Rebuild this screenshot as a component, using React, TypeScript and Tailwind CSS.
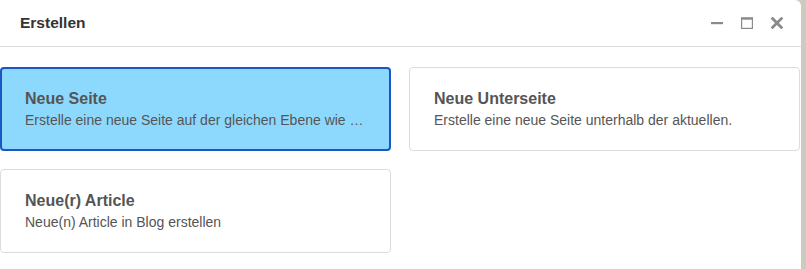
const cards = [
    {
        title: "Neue Seite",
        text: "Erstelle eine neue Seite auf der gleichen Ebene wie …",
        active: true,
    },
    {
        title: "Neue Unterseite",
        text: "Erstelle eine neue Seite unterhalb der aktuellen.",
        active: false,
    },
    {
        title: "Neue(r) Article",
        text: "Neue(n) Article in Blog erstellen",
        active: false,
    },
];

function MinimizeIcon() {
    return (
        <svg width="12" height="12" viewBox="0 0 12 12" className="block">
            <rect x="0" y="5" width="12" height="2.2" fill="#8a8a8a" />
        </svg>
    );
}

function MaximizeIcon() {
    return (
        <svg width="12" height="12" viewBox="0 0 12 12" className="block">
            <rect x="0.6" y="1" width="10.8" height="10.4" fill="none" stroke="#8a8a8a" strokeWidth="1.2" />
            <rect x="0" y="0.5" width="12" height="2.2" fill="#8a8a8a" />
        </svg>
    );
}

function CloseIcon() {
    return (
        <svg width="12" height="12" viewBox="0 0 12 12" className="block">
            <path d="M1.6 1.6 L10.4 10.4 M10.4 1.6 L1.6 10.4" stroke="#8a8a8a" strokeWidth="2.8" strokeLinecap="square" />
        </svg>
    );
}

export default function App() {
    return (
        <div className="flex w-[806px] h-[269px] bg-[#cbcbc0] font-['Liberation_Sans',Arial,sans-serif]">
            <div className="w-[801px] h-full bg-white rounded-tr-[6px] flex flex-col">
                <div className="h-[47px] flex items-center justify-between pl-5 pr-[18px] border-b border-[#dddddd]">
                    <h2 className="text-[15.5px] font-bold text-[#333333]">Erstellen</h2>
                    <div className="flex items-center gap-[18px]">
                        <button className="p-0"><MinimizeIcon /></button>
                        <button className="p-0"><MaximizeIcon /></button>
                        <button className="p-0"><CloseIcon /></button>
                    </div>
                </div>

                <div className="grid grid-cols-2 gap-[18px] pt-5 pr-px">
                    {cards.map((card) => (
                        <div
                            key={card.title}
                            className={
                                card.active
                                    ? "h-[84px] flex flex-col justify-center gap-[2px] pl-[23px] pr-[20px] rounded-[4px] border-2 border-[#1a56c6] bg-[#8dd9fd]"
                                    : "h-[84px] flex flex-col justify-center gap-[2px] pl-[24px] pr-[21px] rounded-[4px] border border-[#dcdcdc] bg-white"
                            }
                        >
                            <div className="text-[16px] leading-[20px] font-bold text-[#555555]">{card.title}</div>
                            <div className="text-[14px] leading-[18px] text-[#555555] whitespace-nowrap">{card.text}</div>
                        </div>
                    ))}
                </div>
            </div>
        </div>
    );
}
